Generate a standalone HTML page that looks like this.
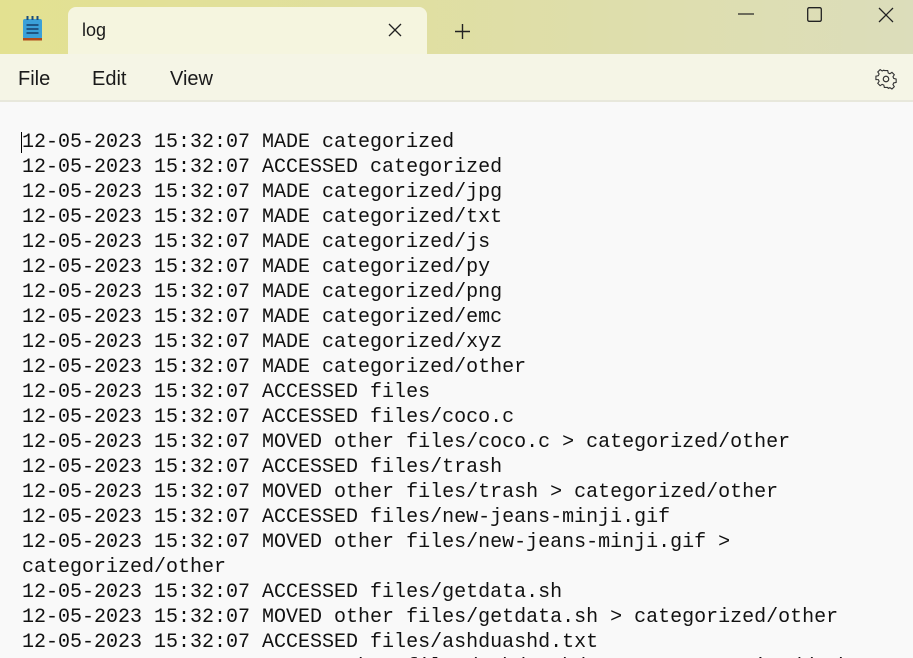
<!DOCTYPE html>
<html style="width:913px;height:658px;overflow:hidden"><head><meta charset="utf-8"><style>
*{margin:0;padding:0;box-sizing:border-box}
body{width:913px;height:658px;overflow:hidden;background:#f9f9f9;position:relative;font-family:"Liberation Sans",sans-serif}
.title{position:absolute;left:0;top:0;width:913px;height:54px;background:linear-gradient(90deg,#e3e191 0%,#e0df9f 40%,#dcddbb 100%)}
.tab{position:absolute;left:68px;top:7px;width:359px;height:48px;background:#f5f5df;border-radius:8px 8px 0 0}
.tab span{position:absolute;left:14px;top:13px;font-size:18px;color:#1a1a1a}
.menu{position:absolute;left:0;top:54px;width:913px;height:48px;background:#f5f5e6;border-bottom:2px solid #e8e8dc}
.menu span{position:absolute;top:14px;font-size:20px;color:#1a1a1a}
.text{position:absolute;left:22px;top:130px;font-family:"Liberation Mono",monospace;font-size:20px;line-height:25px;color:#111;white-space:pre}
.caret{position:absolute;left:21px;top:132px;width:1px;height:21px;background:#000}
</style></head><body>
<div class="title">
<svg style="position:absolute;left:22px;top:16px" width="22" height="27" viewBox="0 0 22 27"><rect x="1" y="3" width="19" height="20" rx="2" fill="#3aa0d8"/><rect x="1" y="22" width="19" height="2.5" fill="#b04a1a"/><g stroke="#1c4d7a" stroke-width="1.8"><line x1="4.5" y1="9" x2="16.5" y2="9"/><line x1="4.5" y1="13" x2="16.5" y2="13"/><line x1="4.5" y1="17" x2="16.5" y2="17"/></g><g fill="#1c4d7a"><rect x="4.5" y="0" width="2" height="4"/><rect x="9.5" y="0" width="2" height="4"/><rect x="14.5" y="0" width="2" height="4"/></g></svg>
<div class="tab"><span>log</span>
<svg style="position:absolute;left:320px;top:16px" width="14" height="14"><path d="M1 1L13 13M13 1L1 13" stroke="#222" stroke-width="1.3"/></svg></div>
<svg style="position:absolute;left:455px;top:24px" width="15" height="15"><path d="M7.5 0V15M0 7.5H15" stroke="#222" stroke-width="1.4"/></svg>
<svg style="position:absolute;left:738px;top:13px" width="16" height="2"><path d="M0 1H16" stroke="#222" stroke-width="1.2"/></svg>
<svg style="position:absolute;left:807px;top:7px" width="15" height="15"><rect x="0.7" y="0.7" width="13.6" height="13.6" rx="1.5" fill="none" stroke="#222" stroke-width="1.3"/></svg>
<svg style="position:absolute;left:878px;top:7px" width="16" height="16"><path d="M1 1L15 15M15 1L1 15" stroke="#222" stroke-width="1.3"/></svg>
</div>
<div class="menu"><span style="left:18px">File</span><span style="left:92px">Edit</span><span style="left:170px">View</span>
<svg style="position:absolute;left:875px;top:14px" width="22" height="22" viewBox="0 0 24 24"><path d="M10 2h4l.6 2.8 2 .9 2.4-1.6 2.8 2.8-1.6 2.4.9 2 2.9.7v4l-2.9.6-.9 2 1.6 2.4-2.8 2.8-2.4-1.6-2 .9L14 22h-4l-.6-2.8-2-.9-2.4 1.6-2.8-2.8 1.6-2.4-.9-2L0 12.6v-4l2.9-.6.9-2L2.2 3.6 5 .8l2.4 1.6 2-.9z" transform="translate(1 1) scale(.92)" fill="none" stroke="#333" stroke-width="1.3"/><circle cx="12" cy="12" r="3" fill="none" stroke="#333" stroke-width="1.3"/></svg>
</div>
<div class="caret"></div>
<div class="text">12-05-2023 15:32:07 MADE categorized
12-05-2023 15:32:07 ACCESSED categorized
12-05-2023 15:32:07 MADE categorized/jpg
12-05-2023 15:32:07 MADE categorized/txt
12-05-2023 15:32:07 MADE categorized/js
12-05-2023 15:32:07 MADE categorized/py
12-05-2023 15:32:07 MADE categorized/png
12-05-2023 15:32:07 MADE categorized/emc
12-05-2023 15:32:07 MADE categorized/xyz
12-05-2023 15:32:07 MADE categorized/other
12-05-2023 15:32:07 ACCESSED files
12-05-2023 15:32:07 ACCESSED files/coco.c
12-05-2023 15:32:07 MOVED other files/coco.c &gt; categorized/other
12-05-2023 15:32:07 ACCESSED files/trash
12-05-2023 15:32:07 MOVED other files/trash &gt; categorized/other
12-05-2023 15:32:07 ACCESSED files/new-jeans-minji.gif
12-05-2023 15:32:07 MOVED other files/new-jeans-minji.gif &gt;
categorized/other
12-05-2023 15:32:07 ACCESSED files/getdata.sh
12-05-2023 15:32:07 MOVED other files/getdata.sh &gt; categorized/other
12-05-2023 15:32:07 ACCESSED files/ashduashd.txt
12-05-2023 15:32:07 MOVED other files/ashduashd.txt &gt; categorized/other</div>
</body></html>
